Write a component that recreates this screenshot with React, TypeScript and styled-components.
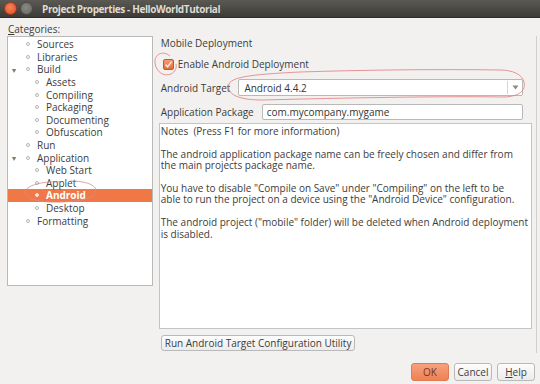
import React from 'react';
import styled, { createGlobalStyle } from 'styled-components';

const GlobalStyle = createGlobalStyle`
  html, body {
    margin: 0;
    padding: 0;
    background: #f2f1f0;
  }
  body {
    font-family: "Open Sans", "Noto Sans", sans-serif;
    font-size: 10px;
    color: #3c3c3c;
  }
`;

export default function App() {
  return (
    <>
      <GlobalStyle />
      <Window>
        <TitleBar>
          <WinButton $close />
          <WinButton />
          <Title>Project Properties - HelloWorldTutorial</Title>
        </TitleBar>
        <Body>
          <CategoriesLabel>
            <u>C</u>ategories:
          </CategoriesLabel>
          <Content>
            <Tree>
              {TREE.map((e) => (
                <TreeRow key={e.id} $selected={e.selected}>
                  <Expander $level={e.level}>{e.open ? '▾' : ''}</Expander>
                  <Bullet $selected={e.selected} />
                  <TreeLabel>{e.label}</TreeLabel>
                </TreeRow>
              ))}
            </Tree>
            <Panel>
              <Heading>Mobile Deployment</Heading>
              <CheckRow>
                <CheckBox>
                  <svg width="9" height="9" viewBox="0 0 9 9">
                    <path d="M1.5 4.6 L3.6 6.8 L7.6 1.8" fill="none" stroke="#fbe3d6" strokeWidth="1.6" />
                  </svg>
                </CheckBox>
                <span>Enable Android Deployment</span>
              </CheckRow>
              <FieldRow $gap={8}>
                <FieldLabel>Android Target</FieldLabel>
                <Combo>
                  <ComboText>Android 4.4.2</ComboText>
                  <ComboArrow>
                    <svg width="7" height="5" viewBox="0 0 7 5">
                      <path d="M0.5 0.5 L6.5 0.5 L3.5 4.5 Z" fill="#8a8a8a" />
                    </svg>
                  </ComboArrow>
                </Combo>
              </FieldRow>
              <FieldRow $gap={8}>
                <FieldLabel>Application Package</FieldLabel>
                <TextField>com.mycompany.mygame</TextField>
              </FieldRow>
              <Notes>{NOTES.join('\n')}</Notes>
              <PlainButton>Run Android Target Configuration Utility</PlainButton>
            </Panel>
          </Content>
          <ButtonRow>
            <OkButton>OK</OkButton>
            <DialogButton>Cancel</DialogButton>
            <DialogButton>
              <u>H</u>elp
            </DialogButton>
          </ButtonRow>
        </Body>
        <Marks width="540" height="384" viewBox="0 0 540 384">
          <path
            d="M170 56 C163 50 154 54 155 63 C156 72 164 77 171 74 C175 72 177 68 176 64"
            fill="none"
            stroke="#e27b7b"
            strokeWidth="0.8"
          />
          <path
            d="M300 72 C260 74 232 76 229 84 C226 95 240 100 262 100 C340 98 440 96 505 97 C520 96 526 90 524 82 C522 74 512 70 500 70 C440 69 360 70 300 72"
            fill="none"
            stroke="#e27b7b"
            strokeWidth="0.8"
          />
          <path
            d="M60 182 C40 181 26 186 25 192 C24 199 40 203 62 202 C84 201 96 197 96 191 C96 185 86 181 70 181"
            fill="none"
            stroke="#d88a8a"
            strokeWidth="0.8"
          />
        </Marks>
      </Window>
    </>
  );
}

const Window = styled.div`
  position: relative;
  width: 540px;
  height: 384px;
  overflow: hidden;
  background: #f2f1f0;
`;

const TitleBar = styled.div`
  height: 18px;
  display: flex;
  align-items: center;
  padding-left: 4px;
  gap: 3px;
  background: linear-gradient(#5a5953, #3c3b37);
  border-bottom: 1px solid #2f2e2b;
  box-sizing: border-box;
`;

const WinButton = styled.div<{ $close?: boolean }>`
  width: 11px;
  height: 11px;
  border-radius: 50%;
  background: ${(p) =>
    p.$close
      ? 'radial-gradient(circle at 45% 40%, #f5845c, #df4b20)'
      : 'radial-gradient(circle at 45% 40%, #8a8983, #65645e)'};
  border: 1px solid ${(p) => (p.$close ? '#a83a18' : '#4c4b46')};
`;

const Title = styled.span`
  margin-left: 6px;
  font-weight: bold;
  font-size: 10px;
  letter-spacing: -0.4px;
  color: #dfdbd2;
`;

const Body = styled.div`
  padding: 4px 3px 0 7px;
  display: flex;
  flex-direction: column;
`;

const CategoriesLabel = styled.div`
  height: 14px;
  line-height: 14px;
  margin-left: 1px;
`;

const Content = styled.div`
  display: flex;
  align-items: flex-start;
  gap: 6px;
`;

const Tree = styled.div`
  width: 144px;
  height: 247px;
  background: #fff;
  border: 1px solid #b9b9b9;
  padding-top: 1px;
  box-sizing: content-box;
`;

const TreeRow = styled.div<{ $selected?: boolean }>`
  height: 12.6px;
  display: flex;
  align-items: center;
  background: ${(p) => (p.$selected ? '#f07746' : 'transparent')};
  color: ${(p) => (p.$selected ? '#fff' : '#3c3c3c')};
  font-weight: ${(p) => (p.$selected ? 'bold' : 'normal')};
`;

const Expander = styled.span<{ $level: number }>`
  width: ${(p) => 18 + p.$level * 9}px;
  padding-left: 4px;
  box-sizing: border-box;
  font-size: 8px;
  color: #777;
`;

const Bullet = styled.span<{ $selected?: boolean }>`
  width: 4px;
  height: 4px;
  border-radius: 50%;
  box-sizing: border-box;
  border: 1px solid ${(p) => (p.$selected ? '#ffe2d4' : '#b5b5b5')};
  background: ${(p) => (p.$selected ? '#ffe2d4' : '#fff')};
  margin-right: 7px;
`;

const TreeLabel = styled.span`
  line-height: 12px;
`;

const Panel = styled.div`
  width: 374px;
  height: 317px;
  display: flex;
  flex-direction: column;
  padding-right: 4px;
  border-right: 1px solid #cfcfcf;
`;

const Heading = styled.div`
  height: 14px;
  line-height: 14px;
  padding-left: 2px;
`;

const CheckRow = styled.div`
  margin-top: 7px;
  height: 14px;
  display: flex;
  align-items: center;
  gap: 4px;
  padding-left: 4px;
`;

const CheckBox = styled.div`
  width: 11px;
  height: 11px;
  box-sizing: border-box;
  border-radius: 2px;
  border: 1px solid #c8582a;
  background: linear-gradient(#f59a6f, #e86c3a);
  display: flex;
  align-items: center;
  justify-content: center;
`;

const FieldRow = styled.div<{ $gap: number }>`
  margin-top: ${(p) => p.$gap}px;
  display: flex;
  align-items: center;
  padding-left: 2px;
  padding-right: 9px;
`;

const FieldLabel = styled.span`
  margin-right: 8px;
  white-space: nowrap;
`;

const Combo = styled.div`
  flex: 1;
  height: 17px;
  box-sizing: border-box;
  border: 1px solid #b8b8b8;
  border-radius: 2px;
  background: #fff;
  display: flex;
  align-items: center;
`;

const ComboText = styled.span`
  flex: 1;
  padding-left: 5px;
  color: #333;
`;

const ComboArrow = styled.span`
  width: 14px;
  height: 13px;
  border-left: 1px solid #d6d6d6;
  display: flex;
  align-items: center;
  justify-content: center;
`;

const TextField = styled.div`
  flex: 1;
  height: 16px;
  line-height: 14px;
  box-sizing: border-box;
  border: 1px solid #b8b8b8;
  border-radius: 2px;
  background: #fff;
  padding-left: 4px;
  color: #333;
`;

const Notes = styled.div`
  margin-top: 3px;
  height: 206px;
  box-sizing: border-box;
  border: 1px solid #c4c4c4;
  background: #fff;
  padding: 2px 0 0 1px;
  line-height: 11.4px;
  white-space: pre;
`;

const PlainButton = styled.div`
  margin-top: 6px;
  align-self: flex-start;
  margin-left: 2px;
  height: 16px;
  line-height: 14px;
  box-sizing: border-box;
  padding: 0 3px;
  border: 1px solid #b9b9b9;
  border-radius: 3px;
  background: linear-gradient(#fdfdfd, #ececec);
`;

const ButtonRow = styled.div`
  margin-top: 10px;
  display: flex;
  justify-content: flex-end;
  gap: 5px;
  padding-right: 2px;
`;

const DialogButton = styled.div`
  width: 38px;
  height: 18px;
  line-height: 16px;
  box-sizing: border-box;
  text-align: center;
  border: 1px solid #b9b9b9;
  border-radius: 3px;
  background: linear-gradient(#fdfdfd, #ebebeb);
`;

const OkButton = styled(DialogButton)`
  border-color: #e07a52;
  background: linear-gradient(#f6a17c, #ef8156);
  color: #7a3518;
`;

const Marks = styled.svg`
  position: absolute;
  left: 0;
  top: 0;
  pointer-events: none;
`;

const TREE = [
  { id: 1, label: 'Sources', level: 0 },
  { id: 2, label: 'Libraries', level: 0 },
  { id: 3, label: 'Build', level: 0, open: true },
  { id: 4, label: 'Assets', level: 1 },
  { id: 5, label: 'Compiling', level: 1 },
  { id: 6, label: 'Packaging', level: 1 },
  { id: 7, label: 'Documenting', level: 1 },
  { id: 8, label: 'Obfuscation', level: 1 },
  { id: 9, label: 'Run', level: 0 },
  { id: 10, label: 'Application', level: 0, open: true },
  { id: 11, label: 'Web Start', level: 1 },
  { id: 12, label: 'Applet', level: 1 },
  { id: 13, label: 'Android', level: 1, selected: true },
  { id: 14, label: 'Desktop', level: 1 },
  { id: 15, label: 'Formatting', level: 0 },
];

const NOTES = [
  'Notes  (Press F1 for more information)',
  '',
  'The android application package name can be freely chosen and differ from',
  'the main projects package name.',
  '',
  'You have to disable "Compile on Save" under "Compiling" on the left to be',
  'able to run the project on a device using the "Android Device" configuration.',
  '',
  'The android project ("mobile" folder) will be deleted when Android deployment',
  'is disabled.',
];
